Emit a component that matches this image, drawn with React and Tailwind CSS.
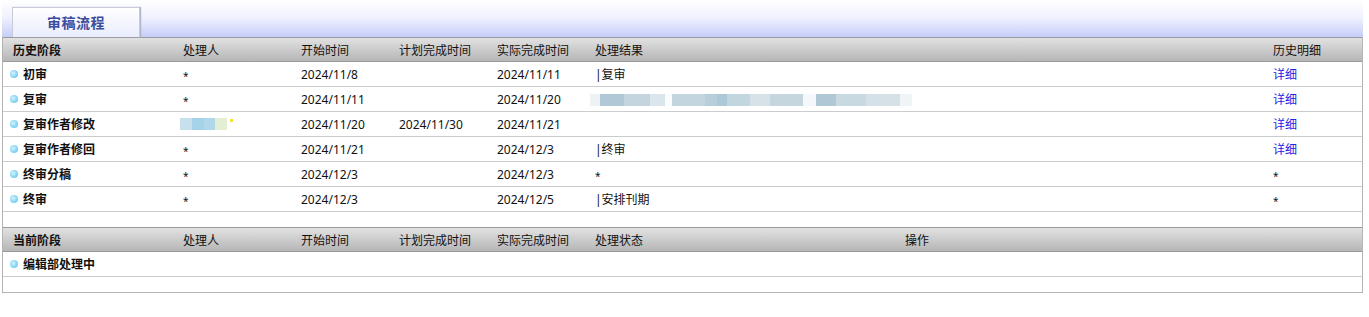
import React from 'react';

const history = [
  { stage: '初审', who: '*', start: '2024/11/8', plan: '', done: '2024/11/11', result: '|复审', detail: 'link' },
  { stage: '复审', who: '*', start: '2024/11/11', plan: '', done: '2024/11/20', result: 'blur', detail: 'link' },
  { stage: '复审作者修改', who: 'blur', start: '2024/11/20', plan: '2024/11/30', done: '2024/11/21', result: '', detail: 'link' },
  { stage: '复审作者修回', who: '*', start: '2024/11/21', plan: '', done: '2024/12/3', result: '|终审', detail: 'link' },
  { stage: '终审分稿', who: '*', start: '2024/12/3', plan: '', done: '2024/12/3', result: '*', detail: '*' },
  { stage: '终审', who: '*', start: '2024/12/3', plan: '', done: '2024/12/5', result: '|安排刊期', detail: '*' },
];

const cols = 'grid grid-cols-[177px_118px_98px_98px_98px_678px_1fr]';
const cols2 = 'grid grid-cols-[177px_118px_98px_98px_98px_310px_1fr]';

const Bullet = () => (
  <span className="inline-block w-[8px] h-[8px] -mt-[2px] rounded-full bg-[radial-gradient(circle_at_40%_40%,#d6f4ff,#7fd3f2_60%,#5bbfe6)] shrink-0" />
);

const Star = () => <span className="inline-block text-[10px] translate-y-[1px]">*</span>;

// text that is blurred out in the original
const BlurResult = () => (
  <div className="flex h-[12px] items-stretch -mt-[1px] -ml-[5px]">
    <span className="w-[10px] bg-[#eef2f5]" />
    <span className="w-[24px] bg-[#b1c9d7]" />
    <span className="w-[26px] bg-[#c5d5df]" />
    <span className="w-[15px] bg-[#dbe5ec]" />
    <span className="w-[7px] bg-[#fafcfd]" />
    <span className="w-[33px] bg-[#c3d5df]" />
    <span className="w-[12px] bg-[#b6cfdb]" />
    <span className="w-[10px] bg-[#adc9d7]" />
    <span className="w-[23px] bg-[#c2d6e0]" />
    <span className="w-[20px] bg-[#d6e1e8]" />
    <span className="w-[33px] bg-[#c6d6df]" />
    <span className="w-[13px] bg-[#f5f8fa]" />
    <span className="w-[20px] bg-[#aec8d6]" />
    <span className="w-[30px] bg-[#c9d9e2]" />
    <span className="w-[34px] bg-[#d5e0e7]" />
    <span className="w-[12px] bg-[#f0f4f6]" />
  </div>
);

const BlurName = () => (
  <div className="flex h-[12px] items-stretch -ml-[3px] -mt-[2px]">
    <span className="w-[12px] bg-[#c8e0ec]" />
    <span className="w-[12px] bg-[#a5d4e8]" />
    <span className="w-[11px] bg-[#b0d8ea]" />
    <span className="w-[12px] bg-[#e4eed2]" />
    <span className="w-[3px] h-[3px] mt-[1px] ml-[3px] bg-[#f2e030]" />
  </div>
);

const Cell = ({ children, className = '' }) => (
  <div className={`pl-[3px] pt-[2px] flex items-center whitespace-nowrap ${className}`}>{children}</div>
);

const HeadRow = ({ grid, children }) => (
  <div className={`${grid} h-[25px] border-t border-b border-[#9a9a9a] bg-gradient-to-b from-[#e2e2e2] to-[#b6b6b6] text-[#111]`}>
    {children}
  </div>
);

const show = (v) => (v === '*' ? <Star /> : v);

export default function App() {
  return (
    <div className="w-[1369px] h-[317px] bg-white text-[12px] text-[#111] font-['Noto_Sans','Noto_Sans_CJK_SC',sans-serif]">
      <div className="ml-[2px] w-[1361px] h-[37px] bg-gradient-to-b from-white via-[#eef0fd] to-[#c5cdf8] flex items-end pl-[10px]">
        <div className="w-[128px] h-[30px] border border-b-0 border-[#c9cbd8] shadow-[1px_0_1px_#b0b4c8] bg-gradient-to-b from-white to-[#e9ecfc] flex items-center justify-center">
          <span className="text-[14px] font-bold tracking-[0.5px] text-[#3b4da0]">审稿流程</span>
        </div>
      </div>

      <div className="ml-[2px] w-[1361px] border-l border-r border-b border-[#b4b4b4]">
        <HeadRow grid={cols}>
          <Cell className="pl-[10px] font-bold">历史阶段</Cell>
          <Cell>处理人</Cell>
          <Cell>开始时间</Cell>
          <Cell>计划完成时间</Cell>
          <Cell>实际完成时间</Cell>
          <Cell>处理结果</Cell>
          <Cell>历史明细</Cell>
        </HeadRow>

        {history.map((r) => (
          <div key={r.stage} className={`${cols} h-[25px] border-b border-[#cccccc]`}>
            <Cell className="pl-[7px] gap-[5px] font-bold">
              <Bullet />
              {r.stage}
            </Cell>
            <Cell>{r.who === 'blur' ? <BlurName /> : show(r.who)}</Cell>
            <Cell>{r.start}</Cell>
            <Cell>{r.plan}</Cell>
            <Cell>{r.done}</Cell>
            <Cell>{r.result === 'blur' ? <BlurResult /> : show(r.result)}</Cell>
            <Cell>
              {r.detail === 'link' ? <a className="text-[#2323e6] cursor-pointer">详细</a> : show(r.detail)}
            </Cell>
          </div>
        ))}

        <div className="h-[15px]" />

        <HeadRow grid={cols2}>
          <Cell className="pl-[10px] font-bold">当前阶段</Cell>
          <Cell>处理人</Cell>
          <Cell>开始时间</Cell>
          <Cell>计划完成时间</Cell>
          <Cell>实际完成时间</Cell>
          <Cell>处理状态</Cell>
          <Cell>操作</Cell>
        </HeadRow>

        <div className={`${cols2} h-[25px] border-b border-[#cccccc]`}>
          <Cell className="pl-[7px] gap-[5px] font-bold">
            <Bullet />
            编辑部处理中
          </Cell>
          <Cell />
          <Cell />
          <Cell />
          <Cell />
          <Cell />
          <Cell />
        </div>
        <div className="h-[15px]" />
      </div>
    </div>
  );
}
